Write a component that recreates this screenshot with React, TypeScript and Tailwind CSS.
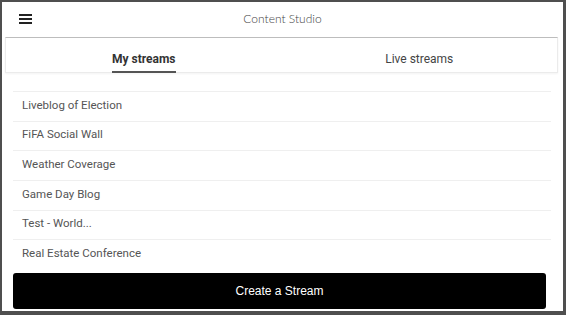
const streams = [
  "Liveblog of Election",
  "FiFA Social Wall",
  "Weather Coverage",
  "Game Day Blog",
  "Test - World...",
  "Real Estate Conference",
]

const App = () => {
  return (
    <div className="w-[566px] h-[315px] bg-white border-[#4f4f4f] border-l-2 border-t-2 border-r-[3px] border-b-4 flex flex-col overflow-hidden font-['Roboto',sans-serif]">
      {/* header */}
      <div className="h-[35px] grid grid-cols-[1fr_auto_1fr] items-center">
        <div className="pl-[17px] pb-[1px]">
          <div className="w-[13px] flex flex-col gap-[2px]">
            <span className="block h-[2px] bg-[#222]" />
            <span className="block h-[2px] bg-[#222]" />
            <span className="block h-[2px] bg-[#222]" />
          </div>
        </div>
        <div className="text-[12px] font-light text-[#444] pb-[2px] font-['Lato',sans-serif]">Content Studio</div>
        <div />
      </div>

      {/* tabs */}
      <div className="ml-[3px] mr-[5px] h-[36px] flex border-t border-t-[#bdbdbd] border-x border-b border-[#ebebeb] shadow-[0_1px_2px_rgba(0,0,0,0.05)]">
        <div className="flex-1 flex justify-center">
          <div className="h-full flex items-end pb-[4px] relative text-[12px] font-bold text-[#333]">
            My streams
            <span className="absolute left-0 right-0 -bottom-[1px] h-[2px] bg-[#555]" />
          </div>
        </div>
        <div className="flex-1 flex justify-center">
          <div className="h-full flex items-end pb-[4px] text-[12px] text-[#444]">Live streams</div>
        </div>
      </div>

      {/* list */}
      <div className="mt-[18px] ml-[11px] mr-[12px] flex flex-col">
        {streams.map((s) => (
          <div key={s} className="h-[29.7px] border-t border-[#efefef] flex items-center pl-[9px] pb-[2px] text-[11.5px] text-[#555]">
            {s}
          </div>
        ))}
      </div>

      <div className="mt-[4px] ml-[11px] mr-[17px]">
        <button className="w-full h-[36px] bg-black rounded-[3px] text-white text-[12px] font-['Liberation_Sans',Arial,sans-serif]">
          Create a Stream
        </button>
      </div>
    </div>
  )
}

export default App
